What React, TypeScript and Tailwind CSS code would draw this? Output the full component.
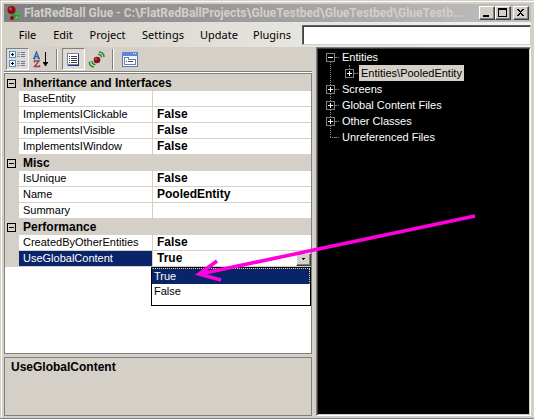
import React from "react";

type Property = { name: string; value: string };
type Category = { title: string; rows: Property[] };

const categories: Category[] = [
  {
    title: "Inheritance and Interfaces",
    rows: [
      { name: "BaseEntity", value: "" },
      { name: "ImplementsIClickable", value: "False" },
      { name: "ImplementsIVisible", value: "False" },
      { name: "ImplementsIWindow", value: "False" },
    ],
  },
  {
    title: "Misc",
    rows: [
      { name: "IsUnique", value: "False" },
      { name: "Name", value: "PooledEntity" },
      { name: "Summary", value: "" },
    ],
  },
  {
    title: "Performance",
    rows: [
      { name: "CreatedByOtherEntities", value: "False" },
      { name: "UseGlobalContent", value: "True" },
    ],
  },
];

const menus = [
  { label: "File", width: "w-[35px]" },
  { label: "Edit", width: "w-[36px]" },
  { label: "Project", width: "w-[53px]" },
  { label: "Settings", width: "w-[58px]" },
  { label: "Update", width: "w-[54px]" },
  { label: "Plugins", width: "w-[52px]" },
];

const selectedProperty = "UseGlobalContent";

function AppIcon() {
  return (
    <svg width="16" height="16" viewBox="0 0 16 16" aria-hidden="true">
      <path d="M5 7l3 5M8 12l4-4M8 11l4 1" stroke="#1f9a22" strokeWidth="2" fill="none" />
      <circle cx="5.500" cy="5" r="4" fill="#8e0d12" />
      <circle cx="4.500" cy="4" r="1.4" fill="#c9484c" />
      <circle cx="11.500" cy="9" r="2" fill="#2cab2e" />
      <circle cx="6" cy="13" r="2" fill="#860b10" />
      <circle cx="11" cy="12.500" r="1.8" fill="#35b637" />
      <path d="M11 8h1v1h-1zM10 12h1v1h-1z" fill="#a6e6a0" />
    </svg>
  );
}

function CategorizedIcon() {
  return (
    <svg width="17" height="17" viewBox="0 0 17 17" shapeRendering="crispEdges" aria-hidden="true">
      {[0, 9].map((y) => (
        <g key={y}>
          <rect x="0.5" y={y + 0.5} width="6" height="6" fill="#eef5fc" stroke="#5b94c4" />
          <path d={`M3 ${y + 2}h1v3H3zM2 ${y + 3}h3v1H2z`} fill="#000" />
          <path d={`M8 ${y + 1}h3v1H8zM8 ${y + 3}h3v1H8zM8 ${y + 5}h3v1H8z`} fill="#8d9cba" />
          <path d={`M12 ${y + 1}h4v1h-4zM12 ${y + 3}h4v1h-4zM12 ${y + 5}h4v1h-4z`} fill="#65789e" />
        </g>
      ))}
    </svg>
  );
}

function AlphabeticalIcon() {
  return (
    <svg width="16" height="17" viewBox="0 0 16 17" aria-hidden="true">
      <path d="M1 7.5L3.5 1L6 7.5M2 5.5h3M0 7.5h2.5M4.5 7.5h2.5" stroke="#285fae" strokeWidth="1.3" fill="none" />
      <path d="M1.5 11.5V10H6L1.5 15.5H6.5V14" stroke="#9b3c44" strokeWidth="1.4" fill="none" />
      <path d="M12 1h1v10h2v1l-1 1-1 2h-1l-1-2-1-1v-1h2z" fill="#000" />
    </svg>
  );
}

function PropertiesIcon() {
  return (
    <svg width="13" height="13" viewBox="0 0 13 13" shapeRendering="crispEdges" aria-hidden="true">
      <rect x="0.5" y="0.5" width="11" height="11" fill="#fff" stroke="#7884ab" />
      <path d="M12 1v12H1v-1h10V1z" fill="#27356d" />
      <path d="M2 3h1v1H2zM2 5h1v1H2zM2 7h1v1H2zM2 9h1v1H2zM4 3h6v1H4zM4 5h6v1H4zM4 7h6v1H4zM4 9h6v1H4z" fill="#343a51" />
    </svg>
  );
}

function BallIcon() {
  return (
    <svg width="17" height="17" viewBox="0 0 17 17" aria-hidden="true">
      <circle cx="9" cy="9" r="3.3" fill="#8b1015" />
      <circle cx="8" cy="8" r="1.1" fill="#d05358" />
      <path d="M10 3.500C12 3 13.500 4.500 13.500 6.500" fill="none" stroke="#258b29" strokeWidth="1.5" />
      <path d="M11 1C14 .8 16 3 16 6" fill="none" stroke="#258b29" strokeWidth="1.5" />
      <path d="M4 10C4 12 5 13.500 7.500 13.500" fill="none" stroke="#258b29" strokeWidth="1.5" />
      <path d="M1.500 10.500C1 14 3 16 6 15.800" fill="none" stroke="#258b29" strokeWidth="1.5" />
    </svg>
  );
}

function PagesIcon() {
  return (
    <svg width="16" height="15" viewBox="0 0 16 15" shapeRendering="crispEdges" aria-hidden="true">
      <rect x="0.5" y="0.5" width="15" height="14" fill="#f5f8fd" stroke="#547bb5" />
      <path d="M0 0h16v4H0z" fill="#5d87d2" />
      <path d="M11 1h1v1h-1zM13 1h1v1h-1z" fill="#fff" />
      <path d="M2.500 12.500v-7h4v2h7v5z" fill="#fff" stroke="#71809d" />
      <path d="M4 9h1v1H4zM6 9h5v1H6z" fill="#374b7c" />
    </svg>
  );
}

function ToolButton({ label, pressed, children }: { label: string; pressed?: boolean; children: React.ReactNode }) {
  return (
    <button
      type="button"
      aria-label={label}
      aria-pressed={pressed}
      className={
        pressed
          ? "flex h-[22px] w-[23px] items-center justify-center border border-b-white border-l-[#808080] border-r-white border-t-[#808080] bg-[#dedbd5]"
          : "flex h-[22px] w-[23px] items-center justify-center"
      }
    >
      {children}
    </button>
  );
}

function ToolSeparator() {
  return <div className="mx-1 h-[21px] w-[2px] border-l border-r border-l-[#808080] border-r-white" />;
}

function CaptionButton({ label, children }: { label: string; children: React.ReactNode }) {
  return (
    <button
      type="button"
      aria-label={label}
      className="flex h-[14px] w-4 items-center justify-center border border-b-[#404040] border-l-white border-r-[#404040] border-t-white bg-[#d4d0c8] shadow-[inset_-1px_-1px_0_#808080]"
    >
      <svg width="10" height="10" viewBox="0 0 10 10" shapeRendering="crispEdges" aria-hidden="true">
        {children}
      </svg>
    </button>
  );
}

function TitleBar() {
  return (
    <header className="flex h-[18px] shrink-0 items-center bg-linear-to-r from-[#808080] to-[#c0c0c0] px-[2px]">
      <AppIcon />
      <h1 className="min-w-0 flex-1 overflow-hidden whitespace-nowrap pl-[2px] font-['Roboto','Liberation_Sans',sans-serif] text-[12px] font-bold leading-[18px] text-[#d4d0c8]">
        FlatRedBall Glue - C:\FlatRedBallProjects\GlueTestbed\GlueTestbed\GlueTestb...
      </h1>
      <div className="flex">
        <CaptionButton label="Minimize">
          <path d="M1 7h6v2H1z" fill="#000" />
        </CaptionButton>
        <CaptionButton label="Maximize">
          <path d="M0 0h9v9H0zM1 2v6h7V2z" fill="#000" fillRule="evenodd" />
        </CaptionButton>
        <div className="ml-[2px] flex">
          <CaptionButton label="Close">
            <path d="M1 1h2v1h1v1h1V2h1V1h2v1H7v1H6v1H5v1h1v1h1v1h1v1H6V7H5V6H4v1H3v1H1V7h1V6h1V5h1V4H3V3H2V2H1z" fill="#000" />
          </CaptionButton>
        </div>
      </div>
    </header>
  );
}

function MenuBar() {
  return (
    <nav className="flex h-[25px] shrink-0 items-center bg-linear-to-r from-[#d6d2ca] to-[#f4f3f0] pl-[6px]" aria-label="Main menu">
      <div className="flex font-['Noto_Sans','DejaVu_Sans',sans-serif] text-[11px] leading-4">
        {menus.map((menu) => (
          <button key={menu.label} type="button" className={`${menu.width} text-center`}>
            {menu.label}
          </button>
        ))}
      </div>
      <input
        aria-label="Search"
        className="ml-1 h-5 min-w-0 flex-1 border border-b-[#d4d0c8] border-l-[#606060] border-r-[#d4d0c8] border-t-[#606060] bg-white px-1 text-[11px] shadow-[inset_1px_1px_0_#404040] outline-none"
      />
    </nav>
  );
}

function ToolBar() {
  return (
    <div className="flex h-[25px] shrink-0 items-center border-b border-[#808080] pl-[2px]" role="toolbar" aria-label="Property view">
      <ToolButton label="Categorized" pressed>
        <CategorizedIcon />
      </ToolButton>
      <ToolButton label="Alphabetical">
        <AlphabeticalIcon />
      </ToolButton>
      <ToolSeparator />
      <ToolButton label="Properties" pressed>
        <PropertiesIcon />
      </ToolButton>
      <ToolButton label="Events">
        <BallIcon />
      </ToolButton>
      <ToolSeparator />
      <ToolButton label="Property pages">
        <PagesIcon />
      </ToolButton>
    </div>
  );
}

function ValueEditor() {
  return (
    <div className="relative flex h-[15px] items-center">
      <select
        aria-label={selectedProperty}
        defaultValue="True"
        className="h-[15px] min-w-0 flex-1 appearance-none bg-white p-0 text-[12px] font-bold leading-[15px] outline-none"
      >
        <option>True</option>
        <option>False</option>
      </select>
      <span className="flex h-[13px] w-[15px] items-center justify-center self-end border border-b-[#404040] border-l-white border-r-[#404040] border-t-white bg-[#d4d0c8] shadow-[inset_-1px_-1px_0_#808080]">
        <svg width="5" height="3" viewBox="0 0 5 3" shapeRendering="crispEdges" aria-hidden="true">
          <path d="M1 0h3v1H3v1H2V1H1z" fill="#000" />
        </svg>
      </span>
      <ul
        role="listbox"
        aria-label="Values"
        className="absolute -left-[6px] right-0 top-4 z-10 h-[39px] border border-black bg-white text-[11px] font-normal leading-[15px]"
      >
        <li role="option" aria-selected="true" className="h-4 border border-dotted border-[#f5db95] border-b-[#0a246a] border-l-[#0a246a] bg-[#0a246a] pl-px text-white">
          True
        </li>
        <li role="option" aria-selected="false" className="h-4 pl-[2px]">
          False
        </li>
      </ul>
    </div>
  );
}

function PropertyGrid() {
  return (
    <div className="flex-1 border border-[#808080] bg-white">
      <table className="w-full table-fixed border-separate border-spacing-0 border-t border-[#d4d0c8] text-left">
        <colgroup>
          <col className="w-[14px]" />
          <col className="w-[134px]" />
          <col />
        </colgroup>
        {categories.map((category) => (
          <tbody key={category.title}>
            <tr className="h-4 bg-[#d4d0c8]">
              <td className="p-0 pl-[2px]">
                <button type="button" aria-label={`Collapse ${category.title}`} className="flex size-[9px] items-center justify-center border border-black">
                  <span className="h-px w-[5px] bg-black" />
                </button>
              </td>
              <th colSpan={2} className="p-0 pl-1 text-[12px] font-bold leading-4">
                {category.title}
              </th>
            </tr>
            {category.rows.map((row) => {
              const selected = row.name === selectedProperty;
              return (
                <tr key={row.name} className="h-4">
                  <td className="bg-[#d4d0c8] p-0" />
                  <th
                    scope="row"
                    className={
                      selected
                        ? "border-b border-r border-[#d4d0c8] bg-[#0a246a] p-0 pl-1 text-[11px] font-normal leading-[15px] text-white"
                        : "border-b border-r border-[#d4d0c8] p-0 pl-1 text-[11px] font-normal leading-[15px]"
                    }
                  >
                    {row.name}
                  </th>
                  <td className="border-b border-[#d4d0c8] p-0 pl-1 text-[12px] font-bold leading-[15px]">
                    {selected ? <ValueEditor /> : row.value}
                  </td>
                </tr>
              );
            })}
          </tbody>
        ))}
      </table>
    </div>
  );
}

function Expander({ open, label }: { open?: boolean; label: string }) {
  return (
    <button type="button" aria-label={label} className="relative flex size-[9px] items-center justify-center border border-[#808080] bg-black">
      <svg width="5" height="5" viewBox="0 0 5 5" shapeRendering="crispEdges" aria-hidden="true">
        <path d={open ? "M0 2h5v1H0z" : "M0 2h5v1H0zM2 0h1v5H2z"} fill="#fff" />
      </svg>
    </button>
  );
}

function TreeRow({ label, expander, selected }: { label: string; expander?: "open" | "closed"; selected?: boolean }) {
  return (
    <div className="flex h-4 items-center">
      {expander ? (
        <Expander open={expander === "open"} label={`Toggle ${label}`} />
      ) : (
        <span className="ml-1 w-[5px] border-t border-dotted border-[#808080]" />
      )}
      <span className="w-1 border-t border-dotted border-[#808080]" />
      <span className={selected ? "ml-px bg-[#d4d0c8] px-[2px] leading-4 text-black" : "ml-px px-[2px] leading-4"}>{label}</span>
    </div>
  );
}

function EntityTree() {
  return (
    <aside className="min-w-0 flex-1 border border-b-white border-l-[#808080] border-r-white border-t-[#808080] bg-black pl-[9px] pt-px text-[11px] text-white shadow-[inset_1px_1px_0_#404040,inset_-1px_-1px_0_#d4d0c8]">
      <ul role="tree" aria-label="Project" className="relative">
        <span className="absolute bottom-2 left-1 top-3 border-l border-dotted border-[#808080]" />
        <li role="treeitem" aria-expanded="true">
          <TreeRow label="Entities" expander="open" />
          <ul role="group" className="relative pl-[19px]">
            <span className="absolute left-[23px] top-0 h-1 border-l border-dotted border-[#808080]" />
            <li role="treeitem" aria-selected="true">
              <TreeRow label="Entities\PooledEntity" expander="closed" selected />
            </li>
          </ul>
        </li>
        <li role="treeitem">
          <TreeRow label="Screens" expander="closed" />
        </li>
        <li role="treeitem">
          <TreeRow label="Global Content Files" expander="closed" />
        </li>
        <li role="treeitem">
          <TreeRow label="Other Classes" expander="closed" />
        </li>
        <li role="treeitem">
          <TreeRow label="Unreferenced Files" />
        </li>
      </ul>
    </aside>
  );
}

function PointerArrow() {
  return (
    <svg className="pointer-events-none absolute left-[190px] top-[210px] z-20" width="290" height="75" viewBox="190 210 290 75" aria-hidden="true">
      <path d="M475 216L200 274M217 261L199 274L221 280" fill="none" stroke="#ff00dc" strokeWidth="3.6" />
    </svg>
  );
}

export default function App() {
  return (
    <div className="relative flex h-screen flex-col border-b border-[#808080] bg-[#d4d0c8] font-['Liberation_Sans',Arial,sans-serif] text-black">
      <div className="mt-px ml-px flex min-h-0 flex-1 flex-col border-l border-t border-white pb-[2px] pl-[2px] pr-[3px] pt-[2px]">
        <TitleBar />
        <MenuBar />
        <main className="flex min-h-0 flex-1">
          <section className="flex w-3/5 max-w-[308px] shrink-0 flex-col">
            <ToolBar />
            <div className="h-px shrink-0 bg-white" />
            <PropertyGrid />
            <div className="mt-[3px] h-[59px] shrink-0 border border-[#808080] px-[6px] pt-px">
              <h2 className="text-[12px] font-bold leading-4">{selectedProperty}</h2>
            </div>
          </section>
          <div className="w-1 shrink-0" />
          <EntityTree />
        </main>
      </div>
      <PointerArrow />
    </div>
  );
}
